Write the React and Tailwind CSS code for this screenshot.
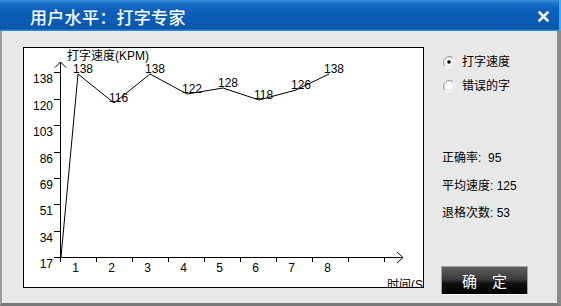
import React from "react";

const pts = [
  [78, 74, 138],
  [114, 103, 116],
  [150, 74, 138],
  [187, 94, 122],
  [223, 88, 128],
  [259, 100, 118],
  [296, 90, 126],
  [329, 74, 138],
];
const yLabels = [17, 34, 51, 69, 86, 103, 120, 138];
const font = '"Liberation Sans", "Noto Sans CJK SC", sans-serif';

function Chart() {
  const linePts = [[61, 257], ...pts.map(([x, y]) => [x, y])]
    .map((p) => p.join(","))
    .join(" ");
  return (
    <svg width="399" height="239" className="block" style={{ fontFamily: font }}>
      <g transform="translate(-24,-48)" fill="#000" fontSize="12">
        {/* axes */}
        <line x1="60.5" y1="62" x2="60.5" y2="262" stroke="#000" shapeRendering="crispEdges" />
        <line x1="60" y1="257.5" x2="403" y2="257.5" stroke="#000" shapeRendering="crispEdges" />
        <polyline points="55,67.5 60.5,62 66,67.5" fill="none" stroke="#000" />
        <polyline points="397,252 403,257.5 397,263" fill="none" stroke="#000" />
        {yLabels.map((v, i) => {
          const y = Math.round(257 - i * 26.36) + 0.5;
          return (
            <g key={v}>
              <line x1="54" y1={y} x2="60" y2={y} stroke="#000" shapeRendering="crispEdges" />
              <text x="53" y={y + 10.5} textAnchor="end">{v}</text>
            </g>
          );
        })}
        {Array.from({ length: 10 }).map((_, i) => (
          <line key={i} x1={60.5 + i * 36} y1="257" x2={60.5 + i * 36} y2="262" stroke="#000" shapeRendering="crispEdges" />
        ))}
        {Array.from({ length: 8 }).map((_, i) => (
          <text key={i} x={75.5 + i * 36} y="272" textAnchor="middle">{i + 1}</text>
        ))}
        <text x="67" y="60">打字速度(KPM)</text>
        <polyline points={linePts} fill="none" stroke="#000" strokeWidth="1" />
        {pts.map(([x, y, v], i) => (
          <text key={i} x={x - 5} y={y - 1.5}>{v}</text>
        ))}
        <text x="387" y="289">时间(S)</text>
      </g>
    </svg>
  );
}

function Radio({ checked }) {
  return (
    <svg width="12" height="12" viewBox="0 0 12 12" className="block">
      <path d="M10.2 1.8 A6 6 0 0 0 1.8 10.2" fill="none" stroke="#9a9a9a" strokeWidth="1" />
      <path d="M1.8 10.2 A6 6 0 0 0 10.2 1.8" fill="none" stroke="#ffffff" strokeWidth="1" />
      <circle cx="6" cy="6" r="4.6" fill="#fafafa" stroke="#d8d8d8" strokeWidth="0.8" />
      {checked && <circle cx="6" cy="6" r="1.8" fill="#000" />}
    </svg>
  );
}

export default function App() {
  return (
    <div className="w-[561px] h-[306px] flex flex-col overflow-hidden" style={{ fontFamily: font }}>
      <div className="h-[31px] shrink-0 flex items-center justify-between bg-[linear-gradient(to_bottom,#3b93dd_0%,#1c72c9_10%,#0c61bc_30%,#0a5bb3_75%,#0a55a9_92%,#2b9ae3_100%)] border-r-2 border-[#37b0ee] pl-[30px] pr-[10px]">
        <span className="text-white text-[17px] font-medium leading-none pt-[2px] tracking-[0.3px]" style={{ fontFamily: '"Noto Sans CJK SC", sans-serif' }}>
          用户水平：打字专家
        </span>
        <svg width="11" height="11" viewBox="0 0 11 11" className="block mt-[1px]">
          <path d="M1.5 1.5 L9.5 9.5 M9.5 1.5 L1.5 9.5" stroke="#ffffff" strokeWidth="2.6" strokeLinecap="square" />
        </svg>
      </div>
      <div className="flex-1 flex bg-[#e8e8e8] border-l-2 border-l-[#9c9c9c] border-r-4 border-r-[#8a8a8a] border-b-[3px] border-b-[#7a7a7a] pl-[21px] pt-[16px]">
        <div className="w-[401px] h-[241px] border border-black bg-white shrink-0 overflow-hidden">
          <Chart />
        </div>
        <div className="ml-[17px] flex flex-col text-[12px] text-black leading-[16px]">
          <div className="mt-[7px] flex items-center h-[16px] ml-[2px]">
            <Radio checked />
            <span className="ml-[7px]">打字速度</span>
          </div>
          <div className="mt-[8px] flex items-center h-[16px] ml-[2px]">
            <Radio />
            <span className="ml-[7px]">错误的字</span>
          </div>
          <div className="mt-[56px] h-[16px] ml-[1px] whitespace-pre">正确率:  95</div>
          <div className="mt-[12px] h-[16px] ml-[1px] whitespace-pre">平均速度: 125</div>
          <div className="mt-[11px] h-[16px] ml-[1px] whitespace-pre">退格次数: 53</div>
          <div className="mt-[45px] w-[87px] h-[29px] border border-[#a3a3a3] border-b-white bg-[linear-gradient(to_bottom,#5e5e5e_0%,#3c3c3c_45%,#111111_60%,#000000_100%)] flex items-center justify-center text-white text-[15px] whitespace-pre" style={{ fontFamily: '"Noto Sans CJK SC", sans-serif' }}>
            确　定
          </div>
        </div>
      </div>
    </div>
  );
}
